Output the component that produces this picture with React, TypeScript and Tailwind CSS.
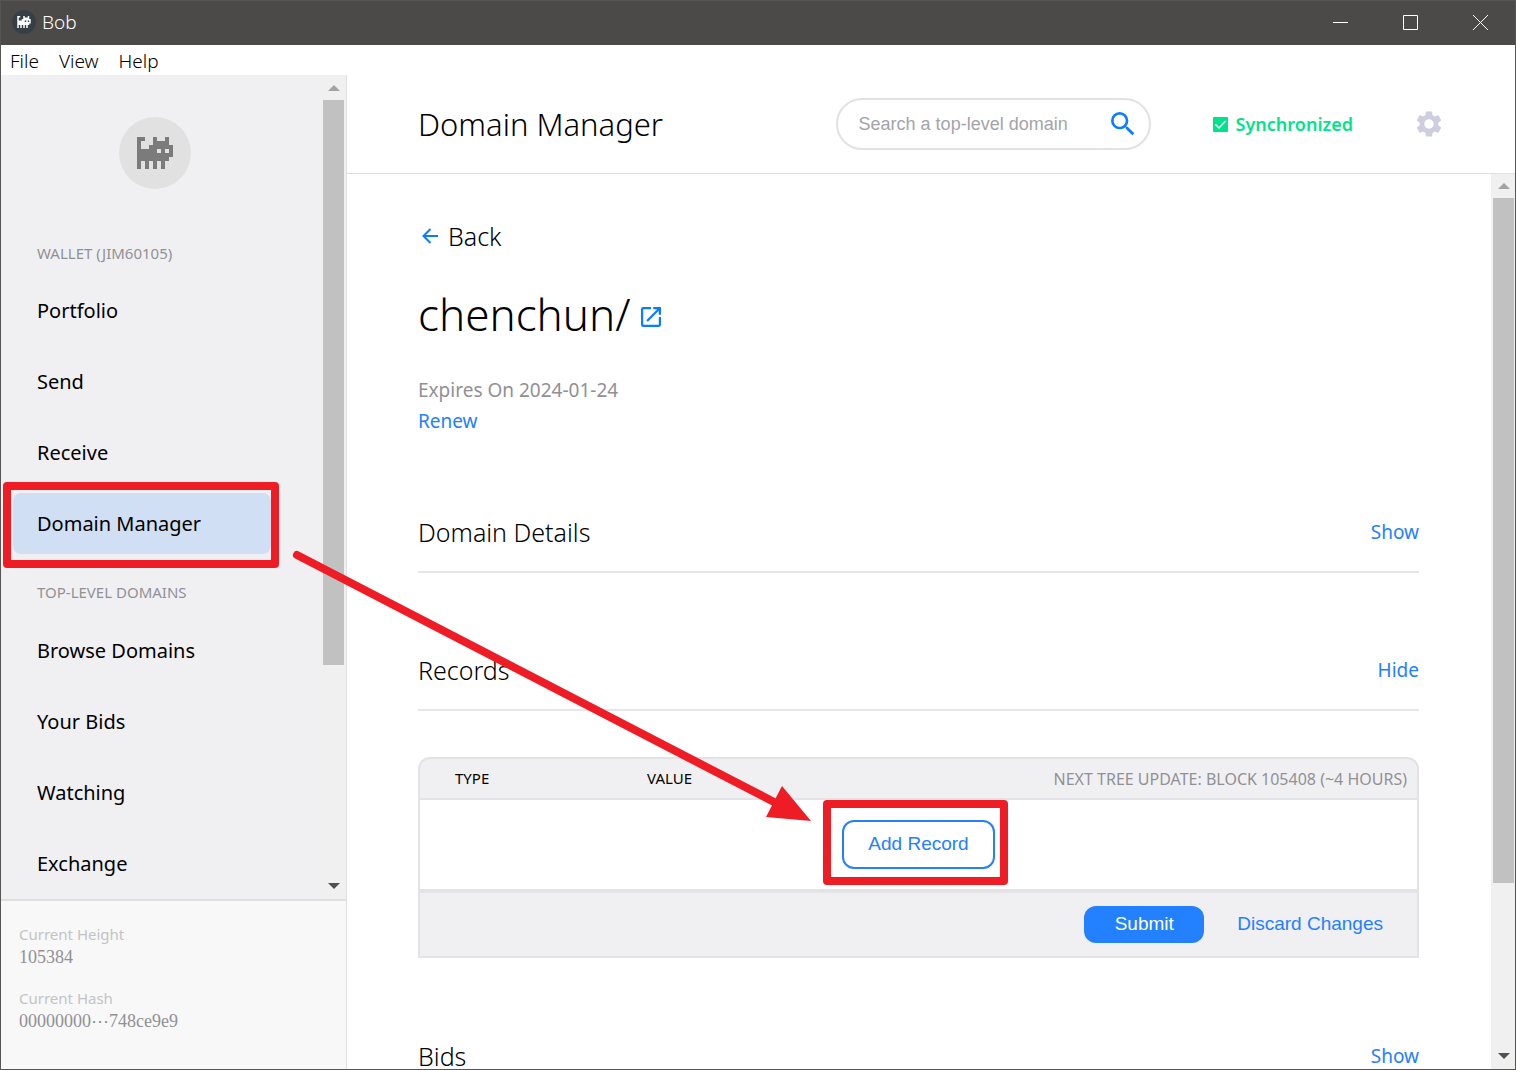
import React from "react";

const CAT_ROWS = [
  "##..#..#.",
  "#...####.",
  "#..######",
  "#####.#.#",
  "#########",
  "########.",
  "#.#.#.#..",
  "#.#.#.#..",
];

function Cat({ className }: { className: string }) {
  const outline = CAT_ROWS.flatMap((row, y) => row.split("").map((c, x) => (c === "#" ? `M${x} ${y}h1v1h-1z` : ""))).join("");
  return (
    <svg viewBox="0 0 9 8" className={className} fill="currentColor" aria-hidden="true">
      <path d={outline} />
    </svg>
  );
}

function Triangle({ down = false }: { down?: boolean }) {
  return (
    <svg viewBox="0 0 12 6" className={down ? "h-[6px] w-[12px] text-[#505050]" : "h-[6px] w-[12px] text-[#a3a3a3]"} fill="currentColor" aria-hidden="true">
      <path d={down ? "M0 0H12L6 6Z" : "M0 6H12L6 0Z"} />
    </svg>
  );
}

function Scrollbar({ className, thumb }: { className: string; thumb: string }) {
  return (
    <div className={`flex w-6 shrink-0 flex-col items-center bg-[#f0f0f0] ${className}`}>
      <div className="flex h-6 items-center">
        <Triangle />
      </div>
      <div className="w-full flex-1">
        <div className={`w-full bg-[#c1c1c1] ${thumb}`} />
      </div>
      <div className="flex h-[26px] items-center">
        <Triangle down />
      </div>
    </div>
  );
}

function NavItem({ label, active = false }: { label: string; active?: boolean }) {
  return (
    <li className="relative flex h-[71px] items-center pl-3 pr-[51px]">
      <a
        href="#"
        className={`flex h-[61px] w-full items-center rounded-lg pl-6 text-xl text-black ${active ? "bg-[#d1dff5]" : ""}`}
      >
        {label}
      </a>
      {active && (
        <div className="pointer-events-none absolute -top-[6px] left-[2px] h-[86px] w-[276px] rounded-[4px] border-8 border-[#ee1c25]" />
      )}
    </li>
  );
}

function Sidebar() {
  return (
    <aside className="flex w-[346px] shrink-0 flex-col border-r border-[#e0e0e2] bg-[#f0f0f3]">
      <div className="flex min-h-0 flex-1">
        <nav className="min-w-0 flex-1 overflow-hidden">
          <div className="mt-[42px] ml-[118px] flex size-[72px] items-center justify-center rounded-full bg-[#e1e1e1] text-[#7b7b7b]">
            <Cat className="h-8 w-9" />
          </div>
          <h2 className="mt-[52px] pl-9 text-[15px] leading-6 text-[#909095]">WALLET (JIM60105)</h2>
          <ul className="mt-[10px]">
            <NavItem label="Portfolio" />
            <NavItem label="Send" />
            <NavItem label="Receive" />
            <NavItem label="Domain Manager" active />
          </ul>
          <h2 className="mt-[21px] pl-9 text-[15px] leading-6 text-[#909095]">TOP-LEVEL DOMAINS</h2>
          <ul className="mt-[11px]">
            <NavItem label="Browse Domains" />
            <NavItem label="Your Bids" />
            <NavItem label="Watching" />
            <NavItem label="Exchange" />
          </ul>
        </nav>
        <Scrollbar className="pl-px pr-[2px] pt-px" thumb="h-[565px]" />
      </div>
      <dl className="h-[170px] shrink-0 border-t-2 border-[#dfdfe1] bg-[#f8f8f8] pl-[18px] pt-[22px]">
        <dt className="text-[15px] leading-[22px] text-[#c3c3c5]">Current Height</dt>
        <dd className="font-['Liberation_Serif',serif] text-[18px] leading-6 text-[#909095]">105384</dd>
        <dt className="mt-[18px] text-[15px] leading-[22px] text-[#c3c3c5]">Current Hash</dt>
        <dd className="font-['Liberation_Serif',serif] text-[18px] leading-6 text-[#909095]">00000000⋯748ce9e9</dd>
      </dl>
    </aside>
  );
}

function Header() {
  return (
    <header className="flex h-[99px] shrink-0 items-center border-b border-[#e0e0e2] pl-[71px] pr-[73px]">
      <h1 className="flex-1 text-[31px] font-light">Domain Manager</h1>
      <label className="flex h-[52px] w-[315px] items-center rounded-[26px] border-2 border-[#e2e2e4] pl-[21px] pr-[14px]">
        <input
          type="text"
          aria-label="Search a top-level domain"
          placeholder="Search a top-level domain"
          className="min-w-0 flex-1 bg-transparent font-['Liberation_Sans',sans-serif] text-[18px] outline-none placeholder:text-[#a4a4a8]"
        />
        <svg viewBox="3 3 18 18" className="size-6 text-[#0a7cff]" fill="currentColor" aria-hidden="true">
          <path d="M15.5 14h-.79l-.28-.27A6.47 6.47 0 0 0 16 9.5 6.5 6.5 0 1 0 9.5 16c1.61 0 3.09-.59 4.23-1.57l.27.28v.79l5 4.99L20.49 19l-4.99-5zm-6 0C7.01 14 5 11.99 5 9.5S7.01 5 9.5 5 14 7.01 14 9.5 11.99 14 9.5 14z" />
        </svg>
      </label>
      <div className="ml-[62px] flex items-center gap-2 text-[#00e38c]">
        <svg viewBox="0 0 15 15" className="size-[15px]" aria-hidden="true">
          <rect width="15" height="15" rx="1" fill="currentColor" />
          <path d="M2.5 7.5L6 11L12.5 4" fill="none" stroke="#fff" strokeWidth="1.5" />
        </svg>
        <span className="text-[18px] font-semibold">Synchronized</span>
      </div>
      <button type="button" aria-label="Settings" className="ml-[63px] text-[#cfcde0]">
        <svg viewBox="2 2 20 20" className="size-[26px]" fill="currentColor" aria-hidden="true">
          <path d="M19.14 12.94c.04-.3.06-.61.06-.94 0-.32-.02-.64-.07-.94l2.03-1.58a.49.49 0 0 0 .12-.61l-1.92-3.32a.488.488 0 0 0-.59-.22l-2.39.96c-.5-.38-1.03-.7-1.62-.94l-.36-2.54a.484.484 0 0 0-.48-.41h-3.84c-.24 0-.43.17-.47.41l-.36 2.54c-.59.24-1.13.57-1.62.94l-2.39-.96c-.22-.08-.47 0-.59.22L2.74 8.87c-.12.21-.08.47.12.61l2.03 1.58c-.05.3-.09.63-.09.94s.02.64.07.94l-2.03 1.58a.49.49 0 0 0-.12.61l1.92 3.32c.12.22.37.29.59.22l2.39-.96c.5.38 1.03.7 1.62.94l.36 2.54c.05.24.24.41.48.41h3.84c.24 0 .44-.17.47-.41l.36-2.54c.59-.24 1.13-.56 1.62-.94l2.39.96c.22.08.47 0 .59-.22l1.92-3.32c.12-.22.07-.47-.12-.61l-2.01-1.58zM12 15.6c-1.98 0-3.6-1.62-3.6-3.6s1.62-3.6 3.6-3.6 3.6 1.62 3.6 3.6-1.62 3.6-3.6 3.6z" />
        </svg>
      </button>
    </header>
  );
}

function SectionHead({ title, action }: { title: string; action: string }) {
  return (
    <div className="flex h-[60px] items-start justify-between border-b-2 border-[#e6e6e8] pt-[7px] leading-6">
      <h3 className="text-[25px] font-light">{title}</h3>
      <button type="button" className="text-[19px] text-[#2380ff]">{action}</button>
    </div>
  );
}

function Records() {
  return (
    <table className="mt-[46px] w-full table-fixed border-separate border-spacing-0 text-left">
      <thead>
        <tr className="h-[43px] bg-[#f0f0f3] text-[15px]">
          <th className="w-[192px] rounded-tl-xl border-y-2 border-l-2 border-[#e2e2e7] pl-[35px] font-normal">TYPE</th>
          <th className="border-y-2 border-[#e2e2e7] pl-[37px] font-normal">VALUE</th>
          <th className="w-[500px] rounded-tr-xl border-y-2 border-r-2 border-[#e2e2e7] pr-[10px] text-right text-base font-normal text-[#909095]">
            NEXT TREE UPDATE: BLOCK 105408 (~4 HOURS)
          </th>
        </tr>
      </thead>
      <tbody>
        <tr className="h-[91px]">
          <td colSpan={3} className="border-x-2 border-b-2 border-[#e2e2e7] p-0 text-center">
            <button
              type="button"
              className="relative h-[49px] w-[153px] rounded-xl border-2 border-[#2380ff] font-['Liberation_Sans',sans-serif] text-[19px] text-[#2380ff]"
            >
              Add Record
              <span className="pointer-events-none absolute -left-[21px] -right-[15px] -top-[22px] -bottom-[18px] rounded-[4px] border-8 border-[#ee1c25]" />
            </button>
          </td>
        </tr>
        <tr className="h-[67px] bg-[#f0f0f3]">
          <td colSpan={3} className="border-2 border-[#e2e2e7] p-0 pr-[34px]">
            <div className="flex items-center justify-end gap-[33px] font-['Liberation_Sans',sans-serif] text-[19px]">
              <button type="button" className="h-[37px] w-[120px] rounded-xl bg-[#2380ff] text-white">Submit</button>
              <button type="button" className="text-[#2380ff]">Discard Changes</button>
            </div>
          </td>
        </tr>
      </tbody>
    </table>
  );
}

function Content() {
  return (
    <main className="min-w-0 flex-1 overflow-hidden pl-[71px] pr-[72px]">
      <a href="#" className="mt-10 flex w-fit items-center text-[25px] leading-[44px] font-light">
        <svg viewBox="0 0 16 16" className="ml-1 mr-[10px] size-4 text-[#0a7cff]" fill="none" stroke="currentColor" strokeWidth="2" aria-hidden="true">
          <path d="M16 8H1.5M8.5 1L1.5 8L8.5 15" />
        </svg>
        Back
      </a>
      <div className="mt-6 flex items-center">
        <h2 className="text-[44px] leading-[64px] font-light">chenchun/</h2>
        <a href="#" aria-label="Open in explorer" className="ml-[10px] mt-[6px] text-[#0a7cff]">
          <svg viewBox="3 3 18 18" className="size-5" fill="currentColor" aria-hidden="true">
            <path d="M19 19H5V5h7V3H5a2 2 0 0 0-2 2v14a2 2 0 0 0 2 2h14c1.1 0 2-.9 2-2v-7h-2v7zM14 3v2h3.59l-9.83 9.83 1.41 1.41L19 6.41V10h2V3h-7z" />
          </svg>
        </a>
      </div>
      <p className="mt-[29px] text-[19px] leading-[31px] text-[#909095]">Expires On 2024-01-24</p>
      <button type="button" className="block text-[19px] leading-[31px] text-[#2380ff]">Renew</button>
      <section className="mt-[76px]">
        <SectionHead title="Domain Details" action="Show" />
      </section>
      <section className="mt-[78px]">
        <SectionHead title="Records" action="Hide" />
        <Records />
      </section>
      <section className="mt-[79px]">
        <SectionHead title="Bids" action="Show" />
      </section>
    </main>
  );
}

export default function App() {
  return (
    <div className="relative flex h-screen flex-col overflow-hidden border border-[#555553] bg-white font-['Noto_Sans','Open_Sans',sans-serif] text-black">
      <div className="flex h-11 shrink-0 items-center bg-[#4c4a48] pb-[2px] pl-[11px] text-white">
        <span className="flex size-6 items-center justify-center rounded-full bg-[#373f46]">
          <Cat className="h-3 w-[14px]" />
        </span>
        <span className="ml-[6px] flex-1 text-[19px] font-light">Bob</span>
        <button type="button" aria-label="Minimize" className="flex w-[70px] justify-center">
          <svg viewBox="0 0 15 15" className="size-[15px]" stroke="currentColor"><path d="M0 7.5H15" /></svg>
        </button>
        <button type="button" aria-label="Maximize" className="flex w-[70px] justify-center">
          <svg viewBox="0 0 15 15" className="size-[15px]" fill="none" stroke="currentColor"><path d="M.5 .5H14.5V14.5H.5Z" /></svg>
        </button>
        <button type="button" aria-label="Close" className="flex w-[70px] justify-center">
          <svg viewBox="0 0 15 15" className="size-[15px]" stroke="currentColor"><path d="M0 0L15 15M15 0L0 15" /></svg>
        </button>
      </div>
      <div className="flex h-[30px] shrink-0 items-center gap-5 pl-[9px] pt-[2px] text-[19px] font-light">
        <button type="button">File</button>
        <button type="button">View</button>
        <button type="button">Help</button>
      </div>
      <div className="flex min-h-0 flex-1">
        <Sidebar />
        <div className="flex min-w-0 flex-1 flex-col">
          <Header />
          <div className="flex min-h-0 flex-1">
            <Content />
            <Scrollbar className="pl-[2px] pr-px" thumb="h-[685px]" />
          </div>
        </div>
      </div>
      <svg viewBox="0 0 520 280" className="pointer-events-none absolute left-[290px] top-[545px] h-[280px] w-[520px]" aria-hidden="true">
        <path d="M6 9L483 256" stroke="#ee1c25" strokeWidth="8" strokeLinecap="round" />
        <path d="M491 240L520 275L475 271Z" fill="#ee1c25" />
      </svg>
    </div>
  );
}
